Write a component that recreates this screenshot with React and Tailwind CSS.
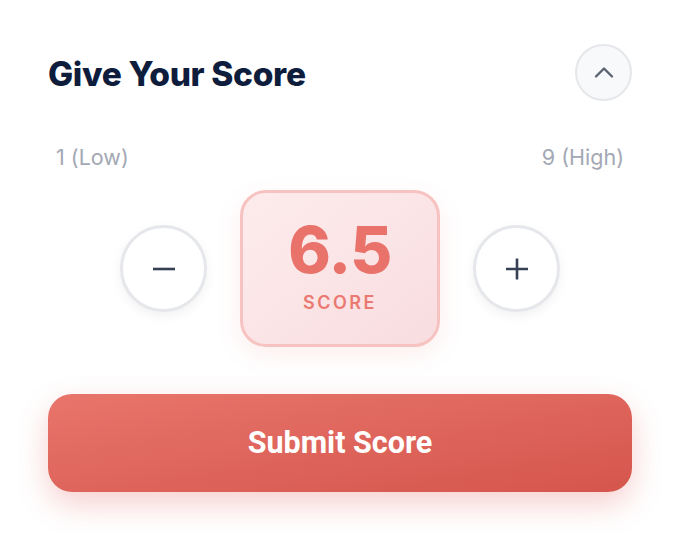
import { useState } from 'react'

export default function App() {
  const [score, setScore] = useState(6.5)

  return (
    <div className="w-[680px] h-[540px] bg-white px-12 pt-11" style={{ fontFamily: 'Inter, "Noto Sans", sans-serif' }}>
      {/* Header */}
      <div className="flex items-center justify-between">
        <h2 className="text-[33.5px] font-extrabold tracking-[-0.01em] text-[#0f1d3d] mt-[3px]">Give Your Score</h2>
        <button className="w-[57px] h-[57px] rounded-full border-2 border-[#e5e7eb] bg-[#f8f9fb] flex items-center justify-center text-[#5b6372]">
          <svg width="24" height="24" viewBox="0 0 24 24" fill="none" stroke="currentColor" strokeWidth="2.4" strokeLinecap="round" strokeLinejoin="round">
            <path d="M4 15.5l8-8 8 8" />
          </svg>
        </button>
      </div>

      {/* Range labels */}
      <div className="flex justify-between px-2 mt-[40px] text-[21.5px] leading-[32px] text-[#a3a8b4]">
        <span>1 (Low)</span>
        <span>9 (High)</span>
      </div>

      {/* Controls */}
      <div className="flex items-center justify-center gap-[33px] mt-[17px]">
        <button
          onClick={() => setScore((s) => Math.max(1, s - 0.5))}
          className="w-[87px] h-[87px] rounded-full border-[3px] border-[#e5e7eb] bg-white flex items-center justify-center text-[#354053] shadow-[0_4px_12px_rgba(0,0,0,0.06)]"
        >
          <svg width="24" height="24" viewBox="0 0 24 24" fill="none" stroke="currentColor" strokeWidth="2.6">
            <path d="M1 12h22" />
          </svg>
        </button>

        <div className="w-[200px] h-[157px] rounded-[26px] border-[3px] border-[#f7c3c1] bg-gradient-to-br from-[#fdeced] to-[#f9dde0] flex flex-col items-center pt-[25px] shadow-[0_8px_24px_rgba(233,114,106,0.12)]">
          <div className="text-[64.5px] leading-none font-extrabold text-[#e9736b] tracking-[-0.01em]">{score.toFixed(1)}</div>
          <div className="mt-[11px] text-[18px] leading-none font-semibold tracking-[0.14em] text-[#ea7a71]">SCORE</div>
        </div>

        <button
          onClick={() => setScore((s) => Math.min(9, s + 0.5))}
          className="w-[87px] h-[87px] rounded-full border-[3px] border-[#e5e7eb] bg-white flex items-center justify-center text-[#354053] shadow-[0_4px_12px_rgba(0,0,0,0.06)]"
        >
          <svg width="24" height="24" viewBox="0 0 24 24" fill="none" stroke="currentColor" strokeWidth="2.6">
            <path d="M12 1.5v21M1 12h22" />
          </svg>
        </button>
      </div>

      {/* Submit */}
      <button className="mt-[47px] w-full h-[98px] rounded-[24px] bg-gradient-to-br from-[#e8756b] to-[#d5554c] text-white text-[30.5px] font-bold shadow-[0_12px_30px_rgba(226,100,92,0.3)]" style={{ fontFamily: 'Roboto, Inter, sans-serif' }}>
        Submit Score
      </button>
    </div>
  )
}
